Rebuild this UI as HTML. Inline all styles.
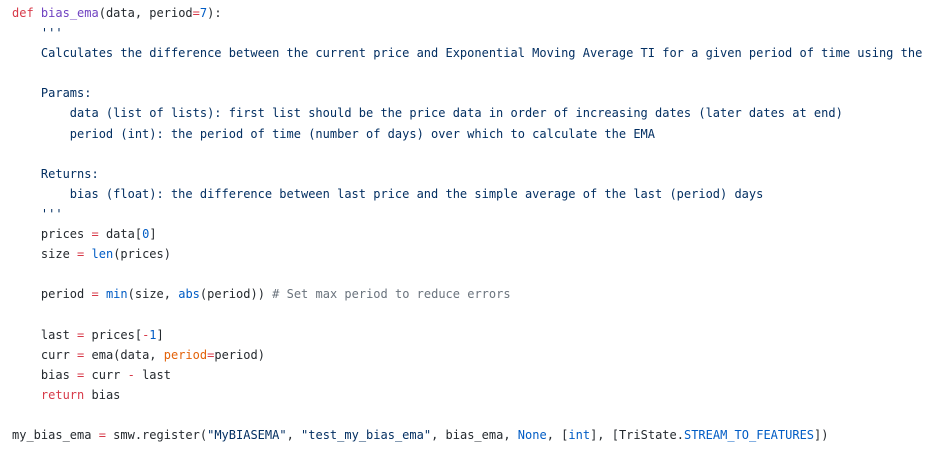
<html><head><style>
body{margin:0;background:#fff;}
pre{margin:0;padding:3px 0 0 12px;font-family:"DejaVu Sans Mono",monospace;font-size:12px;line-height:20.1px;color:#24292e;}
.k{color:#d73a49}.f{color:#6f42c1}.n{color:#005cc5}.s{color:#032f62}.c{color:#6a737d}.o{color:#e36209}
</style></head><body><pre><span class="k">def</span> <span class="f">bias_ema</span>(data, period<span class="k">=</span><span class="n">7</span>):
    <span class="s">'''</span>
<span class="s">    Calculates the difference between the current price and Exponential Moving Average TI for a given period of time using the</span>

<span class="s">    Params:</span>
<span class="s">        data (list of lists): first list should be the price data in order of increasing dates (later dates at end)</span>
<span class="s">        period (int): the period of time (number of days) over which to calculate the EMA</span>

<span class="s">    Returns:</span>
<span class="s">        bias (float): the difference between last price and the simple average of the last (period) days</span>
<span class="s">    '''</span>
    prices <span class="k">=</span> data[<span class="n">0</span>]
    size <span class="k">=</span> <span class="n">len</span>(prices)

    period <span class="k">=</span> <span class="n">min</span>(size, <span class="n">abs</span>(period)) <span class="c"># Set max period to reduce errors</span>

    last <span class="k">=</span> prices[<span class="k">-</span><span class="n">1</span>]
    curr <span class="k">=</span> ema(data, <span class="o">period</span><span class="k">=</span>period)
    bias <span class="k">=</span> curr <span class="k">-</span> last
    <span class="k">return</span> bias

my_bias_ema <span class="k">=</span> smw.register(<span class="s">"MyBIASEMA"</span>, <span class="s">"test_my_bias_ema"</span>, bias_ema, <span class="n">None</span>, [<span class="n">int</span>], [TriState.<span class="n">STREAM_TO_FEATURES</span>])
</pre></body></html>
